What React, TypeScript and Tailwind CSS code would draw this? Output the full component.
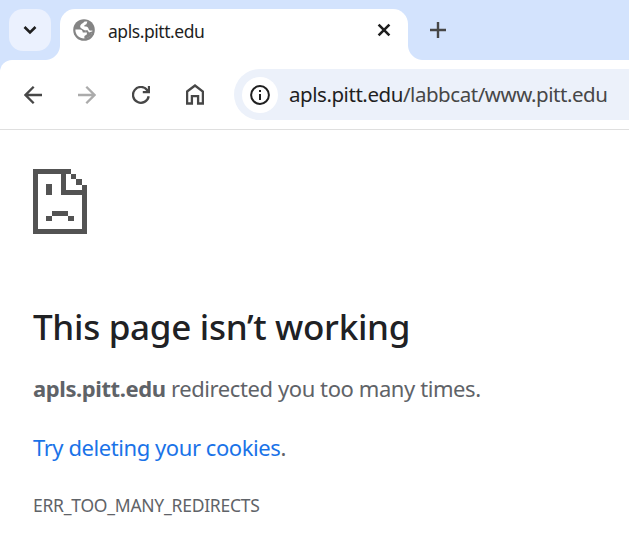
import React from 'react';

function GlobeIcon() {
  return (
    <svg width="22" height="22" viewBox="0 0 22 22" className="shrink-0">
      <circle cx="11" cy="11" r="10.8" fill="#848484" />
      <path
        d="M11.6 2.6H14.4L13.4 5.2L11.4 6.2V7.6H13.2C15.2 7.8 15.4 9.4 15.8 10.6C16.6 12 18 11.8 19.4 11.6C19 15.8 16 18.8 12 19.5C6.8 20 2.2 16 2.4 10.5H6.8C8.8 10.6 9.6 11.6 9.8 13.6H12.2V11.6C10.6 11 9.6 10.2 8.6 9.6C6.8 8.4 6.8 6.6 8 5.4C9 4.6 10.2 4.4 11.6 2.6Z"
        fill="#fff"
      />
      <path d="M12.2 11.2H14.6L16 13.4L19.6 12.2L18 16.5L13.4 19.6L11.4 20V17L13.8 15.6L14 13.6H12.2Z" fill="#848484" />
    </svg>
  );
}

function SadPage() {
  return (
    <svg width="54" height="65" viewBox="0 0 54 65" fill="#535353" shapeRendering="crispEdges">
      <path d="M0 0H38V5H33V21H49V16H54V65H0ZM5 5V60H49V26H28V5Z" fillRule="evenodd" />
      <path d="M38 5H43V10H38ZM43 10H49V16H43ZM13 15H19V26H13ZM19 42H35V47H19ZM13 47H19V52H13ZM35 47H41V52H35Z" />
    </svg>
  );
}

function TabStrip() {
  return (
    <div className="flex h-[60px] items-end bg-[#d3e3fd]">
      <div className="ml-[9px] mb-[9px] flex size-[42px] shrink-0 items-center justify-center rounded-[14px] bg-[#ebf1fe]">
        <svg width="14" height="10" viewBox="0 0 14 10" fill="none" stroke="#1f1f1f" strokeWidth="2.6">
          <path d="M1.5 2L7 7.4L12.5 2" />
        </svg>
      </div>
      <div className="-ml-[6px] h-[15px] w-[15px] shrink-0 bg-[radial-gradient(circle_at_0_0,transparent_14.5px,white_15.5px)]" />
      <div className="flex h-[51px] w-[348px] shrink-0 items-center rounded-t-[15px] bg-white pb-[9px] pl-[13px] pr-[16px]">
        <GlobeIcon />
        <span className="ml-[13px] mt-[2px] text-[17.5px] leading-6 tracking-[-0.45px] text-[#1f1f1f]">apls.pitt.edu</span>
        <svg className="ml-auto" width="16" height="16" viewBox="0 0 16 16" stroke="#1f1f1f" strokeWidth="2.6">
          <path d="M2.6 2.6L13.4 13.4M13.4 2.6L2.6 13.4" />
        </svg>
      </div>
      <div className="h-[15px] w-[15px] shrink-0 bg-[radial-gradient(circle_at_100%_0,transparent_14.5px,white_15.5px)]" />
      <svg className="mb-[22px] ml-[7px]" width="16" height="16" viewBox="0 0 16 16" stroke="#474747" strokeWidth="2.4">
        <path d="M8 0V16M0 8H16" />
      </svg>
    </div>
  );
}

function Toolbar() {
  return (
    <div className="bg-[#d3e3fd]">
      <div className="flex h-[70px] items-center rounded-tl-[12px] border-b border-[#dfdfdf] bg-white pl-[24px]">
        <svg className="shrink-0" width="18" height="18" viewBox="0 0 18 18" fill="none" stroke="#474747" strokeWidth="2.3">
          <path d="M18 9H1.8M9.7 .8L1.5 9L9.7 17.2" />
        </svg>
        <svg className="ml-[36px] shrink-0" width="18" height="18" viewBox="0 0 18 18" fill="none" stroke="#ababab" strokeWidth="2.3">
          <path d="M0 9H16.2M8.3 .8L16.5 9L8.3 17.2" />
        </svg>
        <svg className="ml-[36px] shrink-0" width="18" height="18" viewBox="0 0 18 18" fill="none" stroke="#474747" strokeWidth="2.3">
          <path d="M16.7 10.3A7.9 7.9 0 1 1 15.3 4.2L16.8 6.2M17 0V6.2H10.8" />
        </svg>
        <svg className="ml-[36px] shrink-0" width="18" height="21" viewBox="0 0 18 21" fill="none" stroke="#474747" strokeWidth="2.3">
          <path d="M1.1 7.5L9 1.5L16.9 7.5V19.5H12.1V12.2H5.9V19.5H1.1Z" />
        </svg>
        <div className="ml-[30px] flex h-[51px] min-w-0 flex-1 items-center overflow-hidden rounded-l-[26px] bg-[#ecf1fa] pl-[8px]">
          <div className="flex size-[36px] shrink-0 items-center justify-center rounded-full bg-white">
            <svg width="20" height="20" viewBox="0 0 20 20" fill="none" stroke="#1f1f1f" strokeWidth="2">
              <circle cx="10" cy="10" r="8.9" />
              <path d="M10 9V15M10 5V7.1" />
            </svg>
          </div>
          <span className="mb-[2px] ml-[11px] whitespace-nowrap text-[20.5px] leading-8 tracking-[-0.45px] text-[#474747]">
            <span className="text-[#1f1f1f]">apls.pitt.edu</span>/labbcat/www.pitt.edu
          </span>
        </div>
      </div>
    </div>
  );
}

export default function App() {
  return (
    <div className="h-[547px] w-[629px] overflow-hidden bg-white font-['Noto_Sans','Open_Sans',sans-serif]">
      <TabStrip />
      <Toolbar />
      <main className="px-[33px] pt-[39px] text-[#5f6368]">
        <SadPage />
        <h1 className="mt-[69px] whitespace-nowrap text-[35px] font-medium leading-[48px] tracking-[-0.3px] text-[#202124]">This page isn’t working</h1>
        <p className="mt-[20px] whitespace-nowrap text-[22px] leading-[34px] tracking-[-0.41px]">
          <strong className="font-bold">apls.pitt.edu</strong> redirected you too many times.
        </p>
        <p className="mt-[25px] whitespace-nowrap text-[22px] leading-[34px] tracking-[-0.43px]">
          <a className="text-[#1a73e8]">Try deleting your cookies</a>.
        </p>
        <div className="mt-[28px] whitespace-nowrap text-[17.5px] leading-[26px] tracking-[-0.25px]">ERR_TOO_MANY_REDIRECTS</div>
      </main>
    </div>
  );
}
